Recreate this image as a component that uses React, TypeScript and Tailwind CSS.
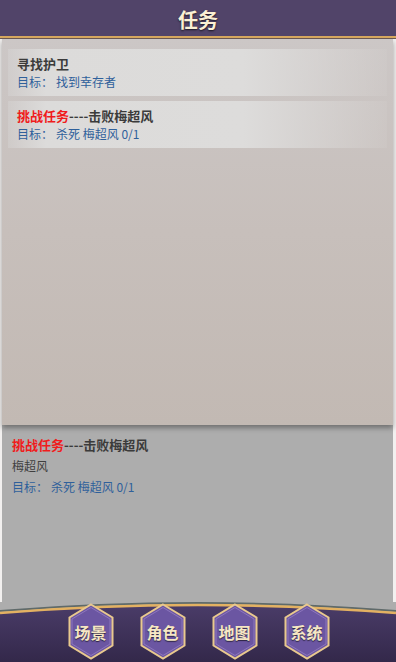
import React from "react";

const font = { fontFamily: '"Noto Sans CJK SC", "Noto Sans", sans-serif' };

function Hex({ label }: { label: string }) {
    return (
        <div className="relative w-[46px] h-[57px] flex items-center justify-center">
            <svg className="absolute inset-0" width="46" height="57" viewBox="0 0 46 57">
                <polygon points="23,1.5 44.5,14.5 44.5,42.5 23,55.5 1.5,42.5 1.5,14.5" fill="#6b56a2" stroke="#e9c98e" strokeWidth="2" />
                <polygon points="23,4.5 42,16 42,41 23,52.5 4,41 4,16" fill="none" stroke="#8d76bd" strokeWidth="1" />
            </svg>
            <span className="relative text-[16px] font-bold text-[#f6e7c4] leading-none [text-shadow:0_1px_1px_rgba(0,0,0,0.6)]">{label}</span>
        </div>
    );
}

function QuestCard({ challenge, title, goal }: { challenge?: boolean; title: string; goal: string }) {
    return (
        <div className="mx-[6px] h-[47px] px-[9px] flex flex-col justify-center bg-[linear-gradient(90deg,rgba(220,220,220,0.3)_0%,#dcdbda_10%,#dddcdb_62%,rgba(214,210,208,0.2)_100%)]">
            <div className="text-[13px] font-bold leading-[18px] text-[#3b3b3b]">
                {challenge && <span className="text-[#f01c1c]">挑战任务</span>}
                {challenge && <span>----</span>}
                {title}
            </div>
            <div className="text-[12px] leading-[17px] text-[#2f609b]">
                目标：<span className="ml-[3px]">{goal}</span>
            </div>
        </div>
    );
}

export default function App() {
    return (
        <div className="w-[396px] h-[662px] flex flex-col overflow-hidden bg-white" style={font}>
            <div className="h-[36px] shrink-0 bg-[#514469] flex items-center justify-center">
                <span className="text-[20px] font-bold text-[#fbf0d4] leading-none pt-[3px] [text-shadow:0_1px_2px_rgba(0,0,0,0.7)]">任务</span>
            </div>
            <div className="h-[3px] shrink-0 bg-[#d7a85f] border-b border-[#6c5a55]" />
            <div className="flex-1 flex flex-col pl-[2px] pr-[3px] bg-[#f2f0ef]">
                <div className="h-[386px] shrink-0 pt-[10px] flex flex-col gap-[5px] bg-[linear-gradient(180deg,#ccc7c6_0%,#c7bfbb_50%,#c2b9b3_100%)] shadow-[0_3px_5px_rgba(0,0,0,0.35)] relative z-10">
                    <QuestCard title="寻找护卫" goal="找到幸存者" />
                    <QuestCard challenge title="击败梅超风" goal="杀死 梅超风 0/1" />
                </div>
                <div className="flex-1 bg-[#adadad] px-[10px] pt-[9px] text-[12px] leading-[21px]">
                    <div className="text-[13px] font-bold text-[#3b3b3b]">
                        <span className="text-[#f01c1c]">挑战任务</span>----击败梅超风
                    </div>
                    <div className="text-[#3f3f3f]">梅超风</div>
                    <div className="text-[#2f609b]">
                        目标：<span className="ml-[3px]">杀死 梅超风 0/1</span>
                    </div>
                </div>
            </div>
            <div className="relative h-[60px] shrink-0 bg-[#adadad]">
                <svg className="absolute left-0 top-0" width="396" height="60" viewBox="0 0 396 60" preserveAspectRatio="none">
                    <defs>
                        <linearGradient id="navbg" x1="0" y1="0" x2="0" y2="1">
                            <stop offset="0" stopColor="#4a3c68" />
                            <stop offset="1" stopColor="#33284a" />
                        </linearGradient>
                    </defs>
                    <path d="M0 11 Q198 -5 396 11 L396 60 L0 60 Z" fill="url(#navbg)" />
                    <path d="M0 9 Q198 -7 396 9" fill="none" stroke="#5f6a6a" strokeWidth="2" />
                    <path d="M0 11 Q198 -5 396 11" fill="none" stroke="#e3b162" strokeWidth="2.5" />
                </svg>
                <div className="relative flex justify-center gap-[26px] pt-[1px] pl-[1px]">
                    <Hex label="场景" />
                    <Hex label="角色" />
                    <Hex label="地图" />
                    <Hex label="系统" />
                </div>
            </div>
        </div>
    );
}
